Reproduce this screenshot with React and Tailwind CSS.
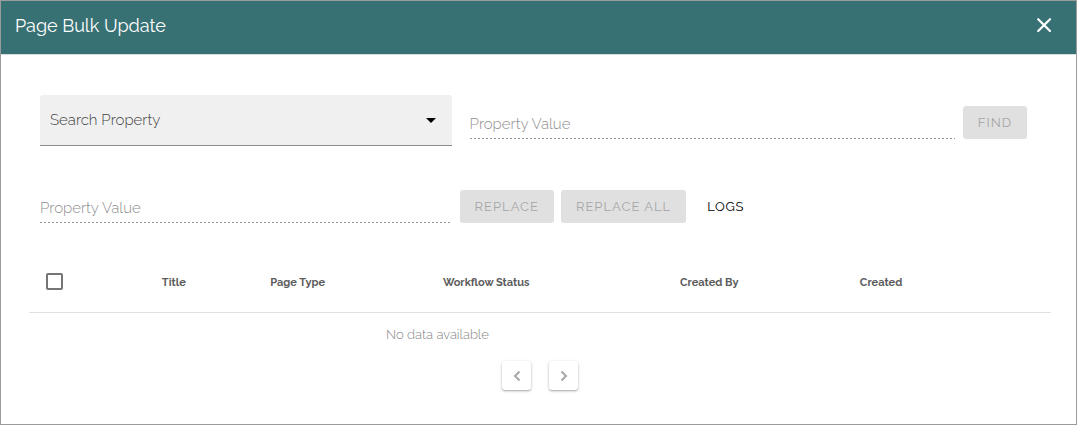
import React from "react";

const columns = ["Title", "Page Type", "Workflow Status", "Created By", "Created"];

function TextField({ label }) {
  return (
    <input
      type="text"
      aria-label={label}
      placeholder={label}
      className="h-7 w-full min-w-0 bg-[repeating-linear-gradient(90deg,#949494_0_2px,transparent_2px_4px)] bg-[length:100%_1px] bg-bottom bg-no-repeat pb-[3px] text-[15px] font-light text-[#333] outline-none placeholder:text-[#8f8f8f]"
    />
  );
}

function ActionButton({ children }) {
  return (
    <button
      type="button"
      disabled
      className="h-[33px] shrink-0 rounded-[3px] bg-[#e0e0e0] px-[15px] text-[13px] tracking-[1px] whitespace-nowrap text-[#a6a6a6]"
    >
      {children}
    </button>
  );
}

function PageButton({ label, path }) {
  return (
    <button
      type="button"
      disabled
      aria-label={label}
      className="flex size-[29px] items-center justify-center rounded-[3px] bg-white text-[#a6a6a6] shadow-[0_1px_2px_rgba(0,0,0,0.3),0_1px_4px_rgba(0,0,0,0.08)]"
    >
      <svg viewBox="0 0 16 16" className="size-4" fill="none" stroke="currentColor" strokeWidth="2" aria-hidden="true">
        <path d={path} />
      </svg>
    </button>
  );
}

export default function App() {
  return (
    <div className="flex min-h-screen flex-col border border-[#9b9b9b] bg-white font-['Raleway','Lato',sans-serif]">
      <header className="flex h-[54px] items-center justify-between border-b border-[#d5dfe0] bg-[#387174] pr-5 pb-1 pl-[14px] text-white">
        <h1 className="text-lg">Page Bulk Update</h1>
        <button type="button" aria-label="Close" className="flex size-6 items-center justify-center">
          <svg viewBox="0 0 24 24" className="size-6" fill="none" stroke="currentColor" strokeWidth="2.2" strokeLinecap="round" aria-hidden="true">
            <path d="M6.2 5.2l11.8 11.8M18 5.2L6.2 17" />
          </svg>
        </button>
      </header>

      <main>
        <form className="pt-10 pr-[49px] pl-[39px]">
          <div className="flex items-end">
            <div className="relative w-[41.7%] shrink-0">
              <select
                aria-label="Search Property"
                defaultValue=""
                className="block h-[51px] w-full appearance-none rounded-t-[3px] border-b border-[#8c8c8c] bg-[#f0f0f0] pr-10 pl-[10px] text-[15px] font-light text-[#444] outline-none"
              >
                <option value="">Search Property</option>
              </select>
              <svg viewBox="0 0 10 5" className="pointer-events-none absolute top-[23px] right-4 h-[5px] w-[10px]" aria-hidden="true">
                <path d="M0 0h10L5 5z" fill="#000" />
              </svg>
            </div>
            <div className="flex flex-1 items-end gap-2 pb-[7px] pl-[18px]">
              <TextField label="Property Value" />
              <ActionButton>FIND</ActionButton>
            </div>
          </div>

          <div className="mt-11 flex items-end">
            <div className="flex w-[41.7%] shrink-0">
              <TextField label="Property Value" />
            </div>
            <div className="flex gap-[7px] pl-2">
              <ActionButton>REPLACE</ActionButton>
              <ActionButton>REPLACE ALL</ActionButton>
              <button type="button" className="h-[33px] px-[14px] text-[13px] tracking-wider text-black">
                LOGS
              </button>
            </div>
          </div>
        </form>

        <div className="mt-[29px] pr-[25px] pl-7">
          <table className="w-full table-fixed">
            <colgroup>
              <col className="w-[13%]" />
              <col className="w-[10.6%]" />
              <col className="w-[16.9%]" />
              <col className="w-[23.2%]" />
              <col className="w-[17.6%]" />
              <col />
            </colgroup>
            <thead>
              <tr className="h-[60px] border-b border-[#e0e0e0] text-left text-[11px] text-[#5c5c5c]">
                <th className="pl-[17px]">
                  <input
                    type="checkbox"
                    aria-label="Select all"
                    className="block size-[17px] appearance-none rounded-[2px] border-2 border-[#757575] bg-white checked:bg-[#387174]"
                  />
                </th>
                {columns.map((name) => (
                  <th key={name} className="pt-0.5 font-bold whitespace-nowrap">
                    {name}
                  </th>
                ))}
              </tr>
            </thead>
            <tbody>
              <tr className="h-11 text-center text-[13px] font-light text-[#858585]">
                <td colSpan={5} className="pr-[14px]">No data available</td>
              </tr>
            </tbody>
          </table>
          <nav aria-label="Pagination" className="mt-[5px] mb-6 flex justify-center gap-[18px]">
            <PageButton label="Previous page" path="M10.5 3.5L6 8l4.5 4.5" />
            <PageButton label="Next page" path="M5.5 3.5L10 8l-4.5 4.5" />
          </nav>
        </div>
      </main>
    </div>
  );
}
